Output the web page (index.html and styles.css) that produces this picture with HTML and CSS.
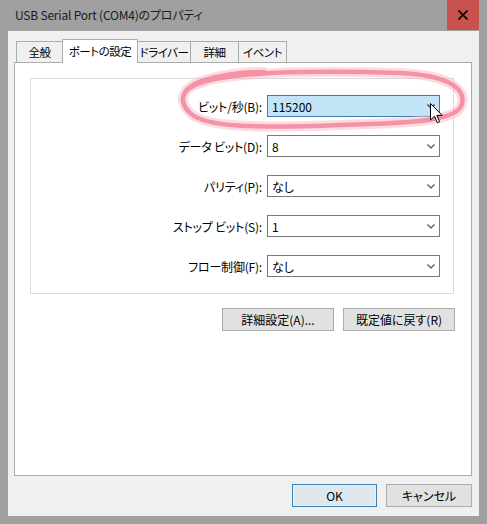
FILE: index.html
```html
<!DOCTYPE html>
<html lang="ja">
<head>
<meta charset="utf-8">
<title>USB Serial Port (COM4)のプロパティ</title>
<link rel="stylesheet" href="styles.css">
</head>
<body>
<div class="window">
  <div class="titlebar">
    <span class="title">USB Serial Port (COM4)のプロパティ</span>
    <div class="close">
      <svg width="10" height="10" viewBox="0 0 10 10"><path d="M0.5 0.5 L9.5 9.5 M9.5 0.5 L0.5 9.5" stroke="#000" stroke-width="1.6" fill="none"/></svg>
    </div>
  </div>
  <div class="client">
    <div class="tabs">
      <div class="tab t1">全般</div>
      <div class="tab t2 active">ポートの設定</div>
      <div class="tab t3">ドライバー</div>
      <div class="tab t4">詳細</div>
      <div class="tab t5">イベント</div>
    </div>
    <div class="panel">
      <div class="group">
        <div class="row">
          <span class="label">ビット/秒(B):</span>
          <div class="combo hot"><span>115200</span><svg class="chev" width="8" height="5" viewBox="0 0 8 5"><path d="M0.5 0.5 L4 4 L7.5 0.5" stroke="#3a4a5a" stroke-width="1.4" fill="none"/></svg></div>
        </div>
        <div class="row">
          <span class="label">データ ビット(D):</span>
          <div class="combo"><span>8</span><svg class="chev" width="8" height="5" viewBox="0 0 8 5"><path d="M0.5 0.5 L4 4 L7.5 0.5" stroke="#606060" stroke-width="1.4" fill="none"/></svg></div>
        </div>
        <div class="row">
          <span class="label">パリティ(P):</span>
          <div class="combo"><span>なし</span><svg class="chev" width="8" height="5" viewBox="0 0 8 5"><path d="M0.5 0.5 L4 4 L7.5 0.5" stroke="#606060" stroke-width="1.4" fill="none"/></svg></div>
        </div>
        <div class="row">
          <span class="label">ストップ ビット(S):</span>
          <div class="combo"><span>1</span><svg class="chev" width="8" height="5" viewBox="0 0 8 5"><path d="M0.5 0.5 L4 4 L7.5 0.5" stroke="#606060" stroke-width="1.4" fill="none"/></svg></div>
        </div>
        <div class="row">
          <span class="label">フロー制御(F):</span>
          <div class="combo"><span>なし</span><svg class="chev" width="8" height="5" viewBox="0 0 8 5"><path d="M0.5 0.5 L4 4 L7.5 0.5" stroke="#606060" stroke-width="1.4" fill="none"/></svg></div>
        </div>
      </div>
      <div class="actions">
        <button class="btn wide">詳細設定(A)...</button>
        <button class="btn wide">既定値に戻す(R)</button>
      </div>
    </div>
    <div class="footer">
      <button class="btn ok default">OK</button>
      <button class="btn cancel">キャンセル</button>
    </div>
  </div>
</div>
<svg class="scribble" width="487" height="524" viewBox="0 0 487 524">
  <g fill="none" stroke-linecap="round" stroke-linejoin="round">
    <path d="M190 88 C212 72, 300 70, 400 73 C445 75, 466 87, 462 104 C458 120, 420 123, 340 125 C262 128, 205 128, 190 113 C177 100, 182 87, 205 80 C225 74, 245 72, 264 72" stroke="#f9b9c5" stroke-width="10" opacity="0.5"/>
    <path d="M190 88 C212 72, 300 70, 400 73 C445 75, 466 87, 462 104 C458 120, 420 123, 340 125 C262 128, 205 128, 190 113 C177 100, 182 87, 205 80 C225 74, 245 72, 264 72" stroke="#f27a92" stroke-width="4.5" opacity="0.75"/>
  </g>
</svg>
<svg class="cursor" width="13" height="22" viewBox="0 0 13 22">
  <path d="M0.5 0.5 V17 L4.5 13.2 L7.3 19.8 L9.6 18.8 L6.9 12.4 H12.2 Z" fill="#fff" stroke="#000" stroke-width="1"/>
</svg>
</body>
</html>
```
FILE: styles.css
```css
* { box-sizing: border-box; }
html, body { margin: 0; padding: 0; }
body {
  width: 487px;
  height: 524px;
  background: #a0a0a0;
  font-family: "Noto Sans CJK JP", "Noto Sans", sans-serif;
  font-size: 12px;
  color: #000;
  overflow: hidden;
  position: relative;
  font-feature-settings: "palt";
}
.window {
  display: flex;
  flex-direction: column;
  height: 524px;
}
.titlebar {
  height: 31px;
  flex: none;
  display: flex;
  align-items: flex-start;
}
.title {
  flex: 1;
  padding: 7px 0 0 15px;
  line-height: 16px;
  font-size: 12px;
  color: #1a1a1a;
  letter-spacing: -0.2px;
}
.close {
  width: 32px;
  height: 30px;
  margin-right: 8px;
  background: #c8534d;
  display: flex;
  align-items: center;
  justify-content: center;
}
.client {
  flex: 1;
  margin: 0 8px 8px 8px;
  background: #f0f0f0;
  padding: 8px 7px 0 6px;
  display: flex;
  flex-direction: column;
}
.tabs {
  display: flex;
  align-items: flex-end;
  height: 24px;
  padding-left: 2px;
  margin-bottom: -1px;
  position: relative;
  z-index: 1;
}
.tab {
  height: 21px;
  margin-bottom: 1px;
  margin-left: -1px;
  border: 1px solid #acacac;
  border-bottom: none;
  background: #f0f0f0;
  display: flex;
  align-items: center;
  justify-content: center;
  line-height: 14px;
  font-size: 11.5px;
  white-space: nowrap;
  letter-spacing: -0.5px;
}
.tab.t1 { width: 47px; margin-left: 0; }
.tab.t2 { width: 76px; }
.tab.t3 { width: 54px; }
.tab.t4 { width: 49px; }
.tab.t5 { width: 49px; }
.tab.active {
  height: 24px;
  margin-bottom: 0;
  background: #fff;
  padding-bottom: 2px;
}
.panel {
  height: 414px;
  flex: none;
  background: #fff;
  border: 1px solid #acacac;
  padding: 15px 16px 0 15px;
}
.group {
  width: 424px;
  height: 216px;
  border: 1px solid #dcdcdc;
  padding-top: 16px;
  display: flex;
  flex-direction: column;
  gap: 18px;
}
.row {
  display: grid;
  grid-template-columns: 231px 173px;
  column-gap: 5px;
  align-items: center;
  height: 22px;
}
.label {
  text-align: right;
  white-space: nowrap;
  letter-spacing: -0.2px;
}
.combo {
  height: 22px;
  border: 1px solid #7a7a7a;
  background: #fff;
  display: flex;
  align-items: center;
  justify-content: space-between;
  padding: 0 4px 0 4px;
}
.combo.hot {
  background: #c2e4f6;
  border-color: #3d7bad;
}
.chev { display: block; }
.actions {
  margin-top: 14px;
  display: flex;
  justify-content: flex-end;
  gap: 9px;
}
.btn {
  height: 23px;
  border: 1px solid #adadad;
  background: #e1e1e1;
  font: inherit;
  font-size: 12px;
  color: #000;
  padding: 0;
  display: flex;
  align-items: center;
  justify-content: center;
}
.btn.wide { width: 112px; }
.footer {
  margin-top: 8px;
  display: flex;
  justify-content: flex-end;
  gap: 9px;
}
.btn.ok { width: 85px; }
.btn.cancel { width: 86px; }
.btn.default {
  border-color: #3c7fb1;
  background: #dfe7ef;
  box-shadow: inset 0 0 0 1px #e8f0f8;
}
.scribble {
  position: absolute;
  left: 0;
  top: 0;
  pointer-events: none;
}
.cursor {
  position: absolute;
  left: 430px;
  top: 103px;
  pointer-events: none;
}
```
